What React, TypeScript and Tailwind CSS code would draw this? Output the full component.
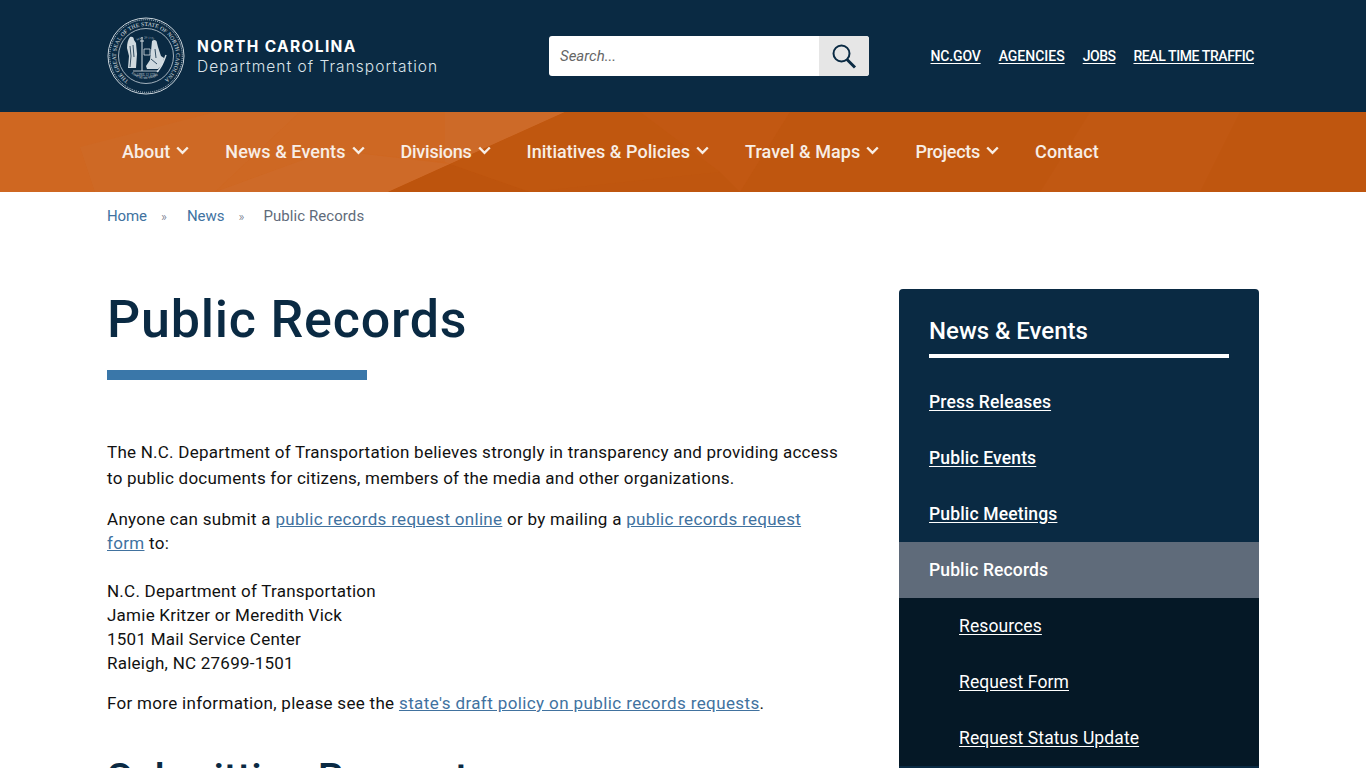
const din = "font-['Roboto','Noto_Sans',sans-serif]";

const navItems = [
  { label: "About", arrow: true, track: "tracking-[0px]" },
  { label: "News & Events", arrow: true, track: "tracking-[0.08px]" },
  { label: "Divisions", arrow: true, track: "tracking-[-0.25px]" },
  { label: "Initiatives & Policies", arrow: true, track: "tracking-[0.05px]" },
  { label: "Travel & Maps", arrow: true, track: "tracking-[0.08px]" },
  { label: "Projects", arrow: true, track: "tracking-[-0.25px]" },
  { label: "Contact", arrow: false, track: "tracking-[0.1px]" },
];

const topLinks = [
  { label: "NC.GOV", track: "tracking-[-0.15px]" },
  { label: "AGENCIES", track: "tracking-[0px]" },
  { label: "JOBS", track: "tracking-[-0.5px]" },
  { label: "REAL TIME TRAFFIC", track: "tracking-[-0.42px]" },
];

function Seal() {
  return (
    <svg width="78" height="78" viewBox="0 0 78 78" className="shrink-0" fill="none">
      <defs>
        <path id="sealTop" d="M21.8 63.6A30 30 0 1 1 56.2 63.6" />
        <path id="sealInnerTop" d="M26 27A18 18 0 0 1 52 27" />
        <path id="sealInnerBottom" d="M19 50A23 23 0 0 0 59 50" />
      </defs>
      <circle cx="39" cy="39" r="38" stroke="#c9d3da" strokeWidth="1" />
      <circle cx="39" cy="39" r="36.3" stroke="#c9d3da" strokeWidth="1" strokeDasharray="1 1" />
      <circle cx="39" cy="39" r="27.5" stroke="#c9d3da" strokeWidth="0.8" />
      <text fontSize="5.6" fill="#e6ecef" fontFamily="Liberation Serif, serif">
        <textPath href="#sealTop" textLength="150" lengthAdjust="spacing">
          THE GREAT SEAL OF THE STATE OF NORTH CAROLINA
        </textPath>
      </text>
      <text fontSize="3" fill="#c9d3da" fontFamily="Liberation Serif, serif">
        <textPath href="#sealInnerTop" startOffset="18%">MAY 20 1775</textPath>
      </text>
      <text fontSize="3" fill="#e6ecef" fontFamily="Liberation Serif, serif">
        <textPath href="#sealInnerBottom" startOffset="18%">ESSE QUAM VIDERI</textPath>
      </text>
      <text x="39" y="59" textAnchor="middle" fontSize="3" fill="#c9d3da" fontFamily="Liberation Serif, serif">
        APRIL 12 1776
      </text>
      {/* left figure */}
      <path d="M23 20c2-1 4 0 4 3l2 3 1 11-1 14h-8l1-12-2-8c0-5 1-8 3-11z" fill="#cfd9df" />
      <path d="M23 29l1 10-1 11M26 28l1 12" stroke="#0a2a43" strokeWidth="0.8" />
      {/* staff */}
      <path d="M35 20v34M33 24h4" stroke="#d5dee3" strokeWidth="1" />
      {/* right figure */}
      <path d="M45 24c2-2 5-1 5 2l1 4 3 9 3 2-1 6-5 5H40l-1-3 4-6 1-9z" fill="#cfd9df" />
      <path d="M44 42l6 5M48 32l1 9" stroke="#0a2a43" strokeWidth="0.8" />
      <path d="M37 32h6v6h-6z" stroke="#d5dee3" strokeWidth="0.8" />
      <path d="M59 38c-2 6-4 12-9 17" stroke="#d5dee3" strokeWidth="1.4" />
      <path d="M26 54h26" stroke="#d5dee3" strokeWidth="0.8" />
    </svg>
  );
}

function NavBackground() {
  return (
    <svg
      className="absolute inset-0 h-full w-full"
      viewBox="0 0 1366 80"
      preserveAspectRatio="none"
      aria-hidden="true"
    >
      <polygon points="0,0 565,0 388,80 0,80" fill="#cf6721" />
      <polygon points="95,80 80,35 215,0 300,0 215,80" fill="#ce6925" />
      <polygon points="300,0 445,0 445,50 330,38 215,80" fill="#ce6823" />
      <polygon points="445,0 565,0 450,52 445,50" fill="#cd6a28" />
      <polygon points="215,80 330,38 450,52 388,80" fill="#ce6a28" />
      <polygon points="450,52 530,80 388,80" fill="#bd540d" />
      <polygon points="565,0 660,0 720,60 530,80 450,52" fill="#c0570f" />
      <polygon points="640,0 790,0 740,80 720,60" fill="#c25812" />
      <polygon points="1090,0 1240,0 1200,80 1040,80" fill="#c15812" />
    </svg>
  );
}

function SideLink({ label, active, sub }: { label: string; active?: boolean; sub?: boolean }) {
  const base = active ? "bg-[#5f6b7a]" : sub ? "bg-[#051826]" : "";
  const text = active
    ? "font-medium tracking-[0.12px]"
    : sub
      ? "font-normal underline tracking-[0.1px]"
      : "font-medium underline tracking-[0.15px]";
  return (
    <a className={`flex h-14 items-center ${sub ? "pl-[60px]" : "pl-[30px]"} ${base}`} href="#">
      <span className={`text-[17.5px] text-white underline-offset-2 ${text}`}>{label}</span>
    </a>
  );
}

export default function App() {
  return (
    <div className={`h-screen overflow-hidden bg-white ${din}`}>
      <header className="flex h-28 bg-[#0a2a43] pl-[107px] pr-[112px]">
        <div className="flex w-[442px] items-center gap-3">
          <Seal />
          <div className="pt-px font-['Inter',sans-serif] text-white">
            <div className="text-[15.5px] leading-[20px] font-bold tracking-[1.35px]">NORTH CAROLINA</div>
            <div className="text-[15.5px] leading-[20px] font-light tracking-[1.03px] text-[#dbe4ea]">
              Department of Transportation
            </div>
          </div>
        </div>
        <div className="flex w-[320px] items-center">
          <div className="flex h-10 w-full overflow-hidden rounded-[3px] bg-white">
            <div className="flex flex-1 items-center pl-[11px] text-[15px] text-[#666] italic">Search...</div>
            <div className="flex w-[50px] items-center justify-center bg-[#e6e6e6]">
              <svg width="26" height="26" viewBox="0 0 26 26" fill="none" stroke="#0a2a43" strokeWidth="2">
                <circle cx="10.5" cy="10.5" r="8" />
                <path d="M16 16.5l8 8" strokeWidth="3" />
              </svg>
            </div>
          </div>
        </div>
        <nav className="ml-auto flex items-center gap-[18px]">
          {topLinks.map((link) => (
            <a key={link.label} href="#" className={`text-[14px] font-medium text-white underline underline-offset-2 ${link.track}`}>
              {link.label}
            </a>
          ))}
        </nav>
      </header>

      <nav className="relative h-20 overflow-hidden bg-[#bf560f]">
        <NavBackground />
        <ul className="relative flex h-full items-center gap-9 pb-px pl-[122px]">
          {navItems.map((item) => (
            <li key={item.label} className="flex items-center gap-1.5 text-[18px] font-medium text-[#f8eee6]">
              <span className={item.track}>{item.label}</span>
              {item.arrow && (
                <svg width="13" height="9" viewBox="0 0 13 9" fill="none" stroke="currentColor" strokeWidth="2.4" className="mb-[3px]">
                  <path d="M1.2 1.5l5.3 5.3 5.3-5.3" />
                </svg>
              )}
            </li>
          ))}
        </ul>
      </nav>

      <div className="flex h-12 items-center pl-[107px] text-[15px] text-[#5f6b7a]">
        <a href="#" className="tracking-[-0.1px] text-[#41729f]">Home</a>
        <span className="mr-[20px] ml-[14px] text-[13px] leading-none font-light">»</span>
        <a href="#" className="text-[#41729f]">News</a>
        <span className="mr-[19px] ml-[14px] text-[13px] leading-none font-light">»</span>
        <span className="tracking-[0.07px]">Public Records</span>
      </div>

      <div className="flex pt-[49px] pl-[107px]">
        <main className="w-[733px]">
          <h1 className="mt-px text-[52px] leading-[60px] font-medium tracking-[0.8px] text-[#0a2a43]">Public Records</h1>
          <div className="mt-5 h-2.5 w-[260px] bg-[#3a77a9]" />
          <p className="mt-[59px] text-[17px] leading-[26px] tracking-[0.24px] text-[#111]">
            The N.C. Department of Transportation believes strongly in transparency and providing access to public
            documents for citizens, members of the media and other organizations.
          </p>
          <p className="mt-[16px] text-[17px] leading-6 tracking-[0.3px] text-[#111]">
            Anyone can submit a{" "}
            <a href="#" className="text-[#41729f] underline">public records request online</a> or by mailing a{" "}
            <a href="#" className="text-[#41729f] underline">public records request form</a> to:
          </p>
          <p className="mt-6 text-[17px] leading-6 tracking-[0.24px] text-[#111]">
            N.C. Department of Transportation
            <br />
            Jamie Kritzer or Meredith Vick
            <br />
            1501 Mail Service Center
            <br />
            Raleigh, NC 27699-1501
          </p>
          <p className="mt-4 text-[17px] leading-6 tracking-[0.3px] text-[#111]">
            For more information, please see the{" "}
            <a href="#" className="tracking-[0.39px] text-[#41729f] underline">state's draft policy on public records requests</a>.
          </p>
          <h2 className="mt-10 text-[41px] leading-[46px] font-medium text-[#0a2a43]">Submitting Requests</h2>
        </main>

        <aside className="ml-[59px] w-[360px] self-start overflow-hidden rounded-[4px] bg-[#0a2a43]">
          <div className="px-[30px] pt-6">
            <h2 className="border-b-4 border-white pb-[5px] text-[24px] leading-9 font-medium text-white">News &amp; Events</h2>
          </div>
          <div className="mt-4 pb-10">
            <SideLink label="Press Releases" />
            <SideLink label="Public Events" />
            <SideLink label="Public Meetings" />
            <SideLink label="Public Records" active />
            <SideLink label="Resources" sub />
            <SideLink label="Request Form" sub />
            <SideLink label="Request Status Update" sub />
          </div>
        </aside>
      </div>
    </div>
  );
}
